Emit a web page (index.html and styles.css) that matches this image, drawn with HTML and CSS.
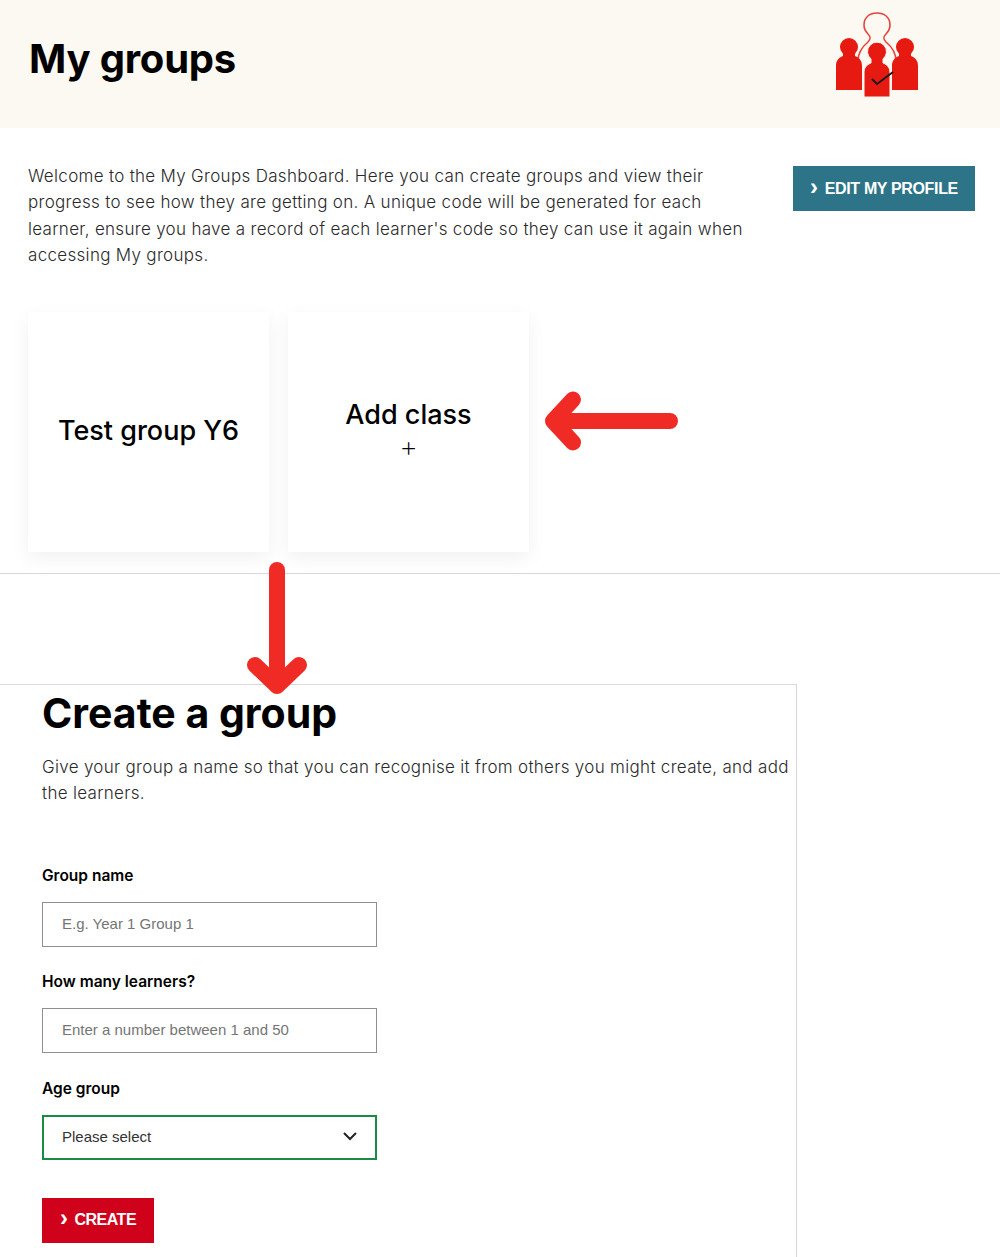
FILE: index.html
```html
<!DOCTYPE html>
<html lang="en">
<head>
  <meta charset="UTF-8" />
  <meta name="viewport" content="width=device-width, initial-scale=1" />
  <title>My groups</title>
  <link rel="stylesheet" href="styles.css">
</head>
<body>

<header class="hero">
  <h1>My groups</h1>
  <svg class="hero-logo" width="84" height="86" viewBox="0 0 84 86" aria-hidden="true">
    <path class="logo-ring" d="M23 49 C23 40 27 35 33 30 C36 27 36 25 33 22 C30 19 29 16 29 13 C29 5 35 1 42 1 C49 1 55 5 55 13 C55 16 54 19 51 22 C48 25 48 27 51 30 C57 35 61 40 61 49" />
    <g class="logo-fill">
      <circle cx="14" cy="35" r="9" />
      <path d="M8 40 L20 40 L20 44 C25 46 27 49 27 54 L27 78 L1 78 L1 54 C1 49 3 46 8 44 Z" />
      <circle cx="70" cy="35" r="9" />
      <path d="M64 40 L76 40 L76 44 C81 46 83 49 83 54 L83 78 L57 78 L57 54 C57 49 59 46 64 44 Z" />
      <path class="logo-front" d="M36 47 A9.500 9.500 0 1 1 48 47 L48 51 C53 53 55 56 55 61 L55 85 L29 85 L29 61 C29 56 31 53 36 51 Z" />
    </g>
    <path class="logo-tick" d="M37 67 L42 72 L58 60" />
  </svg>
</header>

<section class="intro">
  <p>Welcome to the My Groups Dashboard. Here you can create groups and view their progress to see how they are getting on. A unique code will be generated for each learner, ensure you have a record of each learner's code so they can use it again when accessing My groups.</p>
  <a class="btn btn-teal" href="#"><span class="chev">&#8250;</span>EDIT MY PROFILE</a>
</section>

<section class="cards">
  <a class="card" href="#">Test group Y6</a>
  <a class="card" href="#">Add class<span class="plus">+</span></a>
  <svg class="arrow arrow-left" width="136" height="64" viewBox="0 0 136 64" aria-hidden="true">
    <path d="M125 32 L8 32 M28 10.500 L8 32 L28 53.500" />
  </svg>
</section>

<hr class="rule">

<section class="panel">
  <h2>Create a group</h2>
  <p class="lead">Give your group a name so that you can recognise it from others you might create, and add the learners.</p>

  <form class="form">
    <label for="name">Group name</label>
    <input id="name" type="text" placeholder="E.g. Year 1 Group 1">
    <label for="count">How many learners?</label>
    <input id="count" type="text" placeholder="Enter a number between 1 and 50">
    <label for="age">Age group</label>
    <div class="select" id="age">
      Please select
      <svg width="14" height="9" viewBox="0 0 14 9" aria-hidden="true"><path d="M1 1 L7 7 L13 1" /></svg>
    </div>
    <a class="btn btn-red" href="#"><span class="chev">&#8250;</span>CREATE</a>
  </form>
</section>

<svg class="arrow arrow-down" width="64" height="136" viewBox="0 0 64 136" aria-hidden="true">
  <path d="M32 8 L32 124 M10 103 L32 124 L54 103" />
</svg>

</body>
</html>
```

FILE: styles.css
```css
:root {
  --cream: #fcf9f2; --teal: #2d7488; --red: #d0021b; --arrow: #f02a24;
  --text: #2a2a2a; --line: #d8d8d8;
}
html, body { margin: 0; }
body {
  position: relative; min-height: 1257px; overflow: hidden;
  background: #fff; color: var(--text); font-family: "Inter", sans-serif;
}
a { text-decoration: none; }

.hero {
  display: flex; justify-content: space-between; align-items: flex-start;
  height: 128px; background: var(--cream); padding: 0 81px 0 29px;
}
.hero h1 {
  margin: 37px 0 0; font-size: 40px; line-height: 44px;
  font-weight: 700; color: #000; letter-spacing: -0.2px;
}
.hero-logo { margin-top: 12px; }
.logo-ring { fill: none; stroke: #e8423a; stroke-width: 1.6; }
.logo-fill { fill: #e61a10; }
.logo-front { stroke: var(--cream); stroke-width: 1; }
.logo-tick { fill: none; stroke: #1b1b1b; stroke-width: 2; }

.intro {
  display: flex; justify-content: space-between; align-items: flex-start;
  padding: 35px 25px 0 28px;
}
.intro p {
  width: 720px; margin: 0; font-size: 17px; line-height: 26.3px; font-weight: 300;
  letter-spacing: 0.31px;
}
.btn {
  display: flex; align-items: center; justify-content: center;
  height: 45px; color: #fff; font-family: "Liberation Sans", Arial, sans-serif;
  font-size: 16px; font-weight: 700; letter-spacing: -0.35px;
}
.chev { font-size: 24px; line-height: 20px; margin: -4px 7px 0 0; }
.btn-teal { width: 182px; flex: none; margin-top: 3px; background: var(--teal); }
.btn-red { width: 112px; margin-top: 38px; background: var(--red); letter-spacing: -0.5px; }

.cards {
  position: relative; display: flex; gap: 19px;
  margin-top: 44px; padding-left: 28px;
}
.card {
  display: flex; flex-direction: column; align-items: center; justify-content: center;
  width: 241px; height: 240px; padding-bottom: 2px; box-sizing: border-box;
  background: #fff; box-shadow: 0 6px 18px #0000000f;
  color: #000; font-size: 27px; font-weight: 500; line-height: 32px;
}
.plus { font-weight: 200; font-size: 29px; }
.arrow { position: absolute; fill: none; stroke: var(--arrow); stroke-width: 16; stroke-linecap: round; stroke-linejoin: round; }
.arrow-left { left: 545px; top: 77px; }
.arrow-down { left: 245px; top: 562px; }

.rule { height: 1px; margin: 21px 0 0; border: 0; background: var(--line); }

.panel {
  width: 797px; box-sizing: border-box; margin-top: 110px; height: 600px;
  padding: 0 0 0 42px; border-top: 1px solid var(--line); border-right: 1px solid var(--line);
}
.panel h2 { margin: 3px 0 0; font-size: 41px; line-height: 50px; font-weight: 700; color: #000; }
.lead { margin: 16px 0 0; width: 752px; font-size: 17px; line-height: 26.3px; font-weight: 300; letter-spacing: 0.31px; }

.form { display: flex; flex-direction: column; align-items: flex-start; margin-top: 58px; }
.form label { margin: 1px 0 16px; font-size: 15.500px; line-height: 20px; font-weight: 600; color: #000; }
.form input, .select {
  display: flex; align-items: center; justify-content: space-between;
  width: 335px; height: 45px; box-sizing: border-box; margin: 0 0 24.500px;
  padding: 0 18px 2px 19px; border: 1px solid #8f8f8f; border-radius: 0;
  font-family: "Liberation Sans", Arial, sans-serif; font-size: 15px; color: #333; background: #fff;
}
.form input::placeholder { color: #757575; opacity: 1; }
.select { margin-bottom: 0; border: 2px solid #1a8a45; padding-left: 18px; padding-right: 18px; }
.select svg { fill: none; stroke: #222; stroke-width: 2; }
```
